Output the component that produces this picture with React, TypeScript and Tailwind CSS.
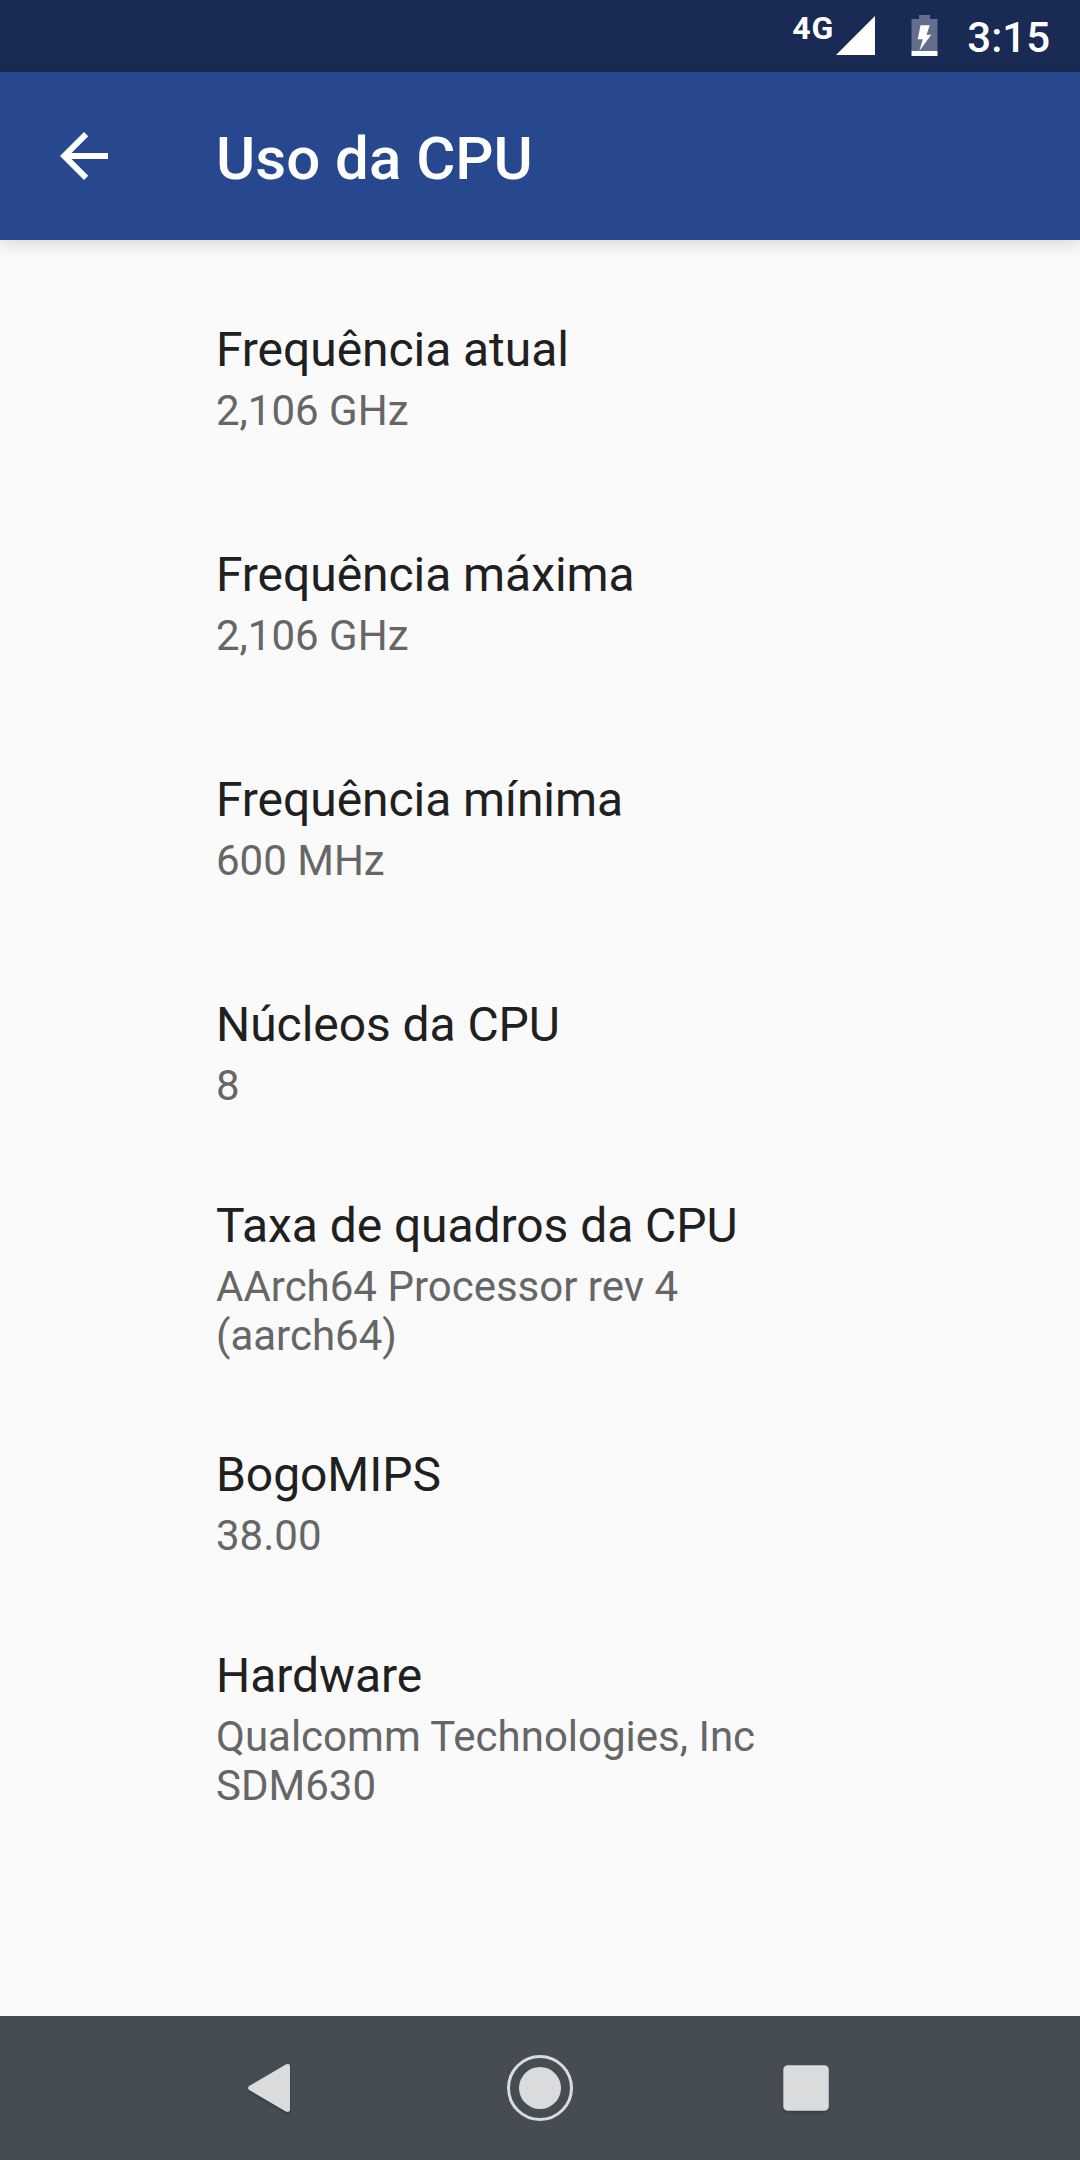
const items = [
  { title: "Frequência atual", lines: ["2,106 GHz"], gap: "mb-[111px]" },
  { title: "Frequência máxima", lines: ["2,106 GHz"], gap: "mb-[111px]" },
  { title: "Frequência mínima", lines: ["600 MHz"], gap: "mb-[111px]" },
  { title: "Núcleos da CPU", lines: ["8"], gap: "mb-[87px]" },
  { title: "Taxa de quadros da CPU", lines: ["AArch64 Processor rev 4", "(aarch64)"], gap: "mb-[86px]" },
  { title: "BogoMIPS", lines: ["38.00"], gap: "mb-[87px]" },
  { title: "Hardware", lines: ["Qualcomm Technologies, Inc", "SDM630"], gap: "" },
];

function StatusBar() {
  return (
    <div className="flex h-[72px] shrink-0 items-start justify-end bg-[#192b55] text-white">
      <span className="mt-[9px] mr-[2px] text-[32px] leading-[38px] font-bold tracking-[1px]">4G</span>
      <svg className="mt-4 h-[39px] w-[39px]" viewBox="0 0 39 39" fill="currentColor">
        <path d="M39 0v39H0z" />
      </svg>
      <svg className="mt-[15px] ml-9 h-[41px] w-[27px]" viewBox="0 0 27 41">
        <path d="M8 0h11v4h7.5v32H.5V4H8z" fill="#616e8d" />
        <path d="M.5 36h26v5H.5z" fill="#fff" />
        <path d="M9.5 10.3h9.3L15.5 19.7h4.8L8.3 36l3.5-11.7H6.7z" fill="#fff" />
      </svg>
      <span className="mt-[13px] mr-[30px] ml-[29px] text-[42px] leading-[50px] font-medium">3:15</span>
    </div>
  );
}

function NavBar() {
  return (
    <nav className="flex h-[144px] shrink-0 items-center justify-center gap-[172px] bg-[#454d53] text-[#dadbdd]">
      <svg className="h-24 w-24 drop-shadow-[0_2px_1px_rgba(0,0,0,0.2)]" viewBox="0 0 96 96" fill="currentColor">
        <path d="M25.2 46l36.6-21.6q4.2-1.6 4.2 2v43.2q0 3.6-4.2 2L25.2 50q-2.4-2 0-4z" />
      </svg>
      <svg className="h-24 w-24" viewBox="0 0 96 96" fill="currentColor">
        <circle cx="48" cy="48" r="21" />
        <circle cx="48" cy="48" r="31.5" fill="none" stroke="currentColor" strokeWidth="3" />
      </svg>
      <svg className="h-24 w-24 drop-shadow-[0_2px_1px_rgba(0,0,0,0.2)]" viewBox="0 0 96 96" fill="currentColor">
        <rect x="23.3" y="25.2" width="45.5" height="45.5" rx="4.5" />
      </svg>
    </nav>
  );
}

export default function App() {
  return (
    <main className="flex h-[2160px] w-[1080px] flex-col overflow-hidden bg-[#fafafa] font-[Roboto,sans-serif]">
      <StatusBar />
      <header className="flex h-[168px] shrink-0 items-center bg-[#27488f] text-white shadow-[0_3px_16px_rgba(0,0,0,0.16)]">
        <svg className="ml-12 h-[72px] w-[72px]" viewBox="0 0 24 24" fill="currentColor">
          <path d="M20 11H7.83l5.59-5.59L12 4l-8 8 8 8 1.41-1.41L7.83 13H20v-2z" />
        </svg>
        <h1 className="mt-[5px] ml-24 text-[60px] leading-[70px] font-medium">Uso da CPU</h1>
      </header>

      <section className="flex grow flex-col pt-[81px] pl-[216px]">
        {items.map((item) => (
          <div key={item.title} className={item.gap}>
            <h2 className="mb-2 text-[48px] leading-[57px] tracking-[-0.06px] text-[#202020]">{item.title}</h2>
            {item.lines.map((line) => (
              <p key={line} className="text-[42px] leading-[49px] text-[#666666]">{line}</p>
            ))}
          </div>
        ))}
      </section>

      <NavBar />
    </main>
  );
}
